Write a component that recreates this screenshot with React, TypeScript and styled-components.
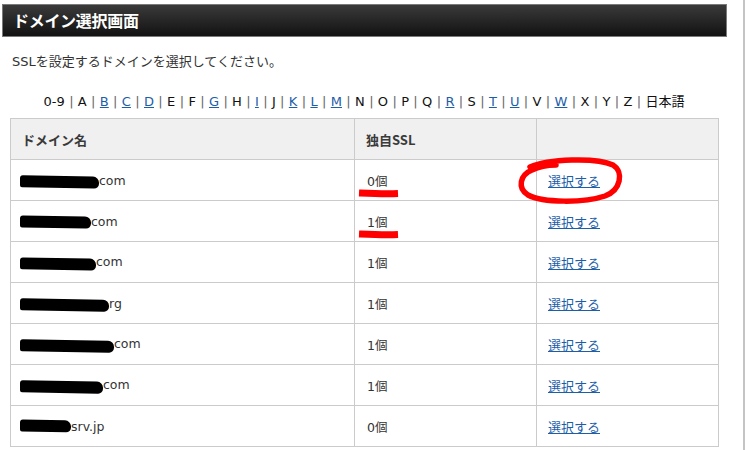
import styled, { createGlobalStyle } from "styled-components";

const GlobalStyle = createGlobalStyle`
    html, body {
        margin: 0;
        padding: 0;
        background: #fff;
    }
    body {
        font-family: "DejaVu Sans", "Noto Sans CJK JP", sans-serif;
        color: #333;
        font-size: 13px;
    }
`;

const Page = styled.div`
    width: 745px;
    min-height: 450px;
    border-right: 2px solid #c4c4c4;
    padding-top: 4px;
    box-sizing: border-box;
`;

const TitleBar = styled.h1`
    margin: 0 0 0 2px;
    width: 725px;
    height: 33px;
    box-sizing: border-box;
    border: 1px solid #7a7a7a;
    background: linear-gradient(#3a3a3a, #121212);
    color: #fff;
    font-family: "Noto Sans CJK JP", sans-serif;
    font-size: 16px;
    font-weight: 700;
    line-height: 31px;
    padding-left: 10px;
    letter-spacing: -0.3px;
`;

const Lead = styled.p`
    margin: 16px 0 0 12px;
    font-size: 13px;
    line-height: 18px;
    color: #333;
`;

const Content = styled.div`
    width: 708px;
    margin-left: 10px;
`;

const AlphaNav = styled.div`
    margin-top: 22px;
    text-align: center;
    font-size: 13px;
    line-height: 18px;
    color: #111;
`;

const Sep = styled.span`
    color: #666;
    margin: 0 4.35px;
`;

const NavLink = styled.a`
    color: #1d5ea8;
    text-decoration: underline;
`;

const Grid = styled.table`
    margin-top: 7px;
    width: 708px;
    border-collapse: collapse;
    table-layout: fixed;
`;

const Head = styled.th<{ $w: number }>`
    box-sizing: border-box;
    width: ${(p) => p.$w}px;
    height: 41px;
    background: #f0f0f0;
    border: 1px solid #cbcbcb;
    text-align: left;
    padding: 0 0 0 11px;
    font-family: "Noto Sans CJK JP", sans-serif;
    font-size: 13px;
    font-weight: 700;
    color: #3a3a3a;
`;

const Cell = styled.td<{ $pad?: number }>`
    position: relative;
    box-sizing: border-box;
    height: 41px;
    border: 1px solid #cbcbcb;
    padding: 0 0 0 ${(p) => p.$pad ?? 9}px;
    font-size: 12.5px;
    color: #333;
    white-space: nowrap;
`;

const Redact = styled.span<{ $w: number; $drop?: number }>`
    display: inline-block;
    width: ${(p) => p.$w}px;
    height: 12px;
    background: #000;
    border-radius: 3px 6px 5px 2px;
    vertical-align: ${(p) => -(p.$drop ?? 2)}px;
    transform: skewY(1deg);
`;

const SelectLink = styled.a`
    color: #1d5ea8;
    text-decoration: underline;
    font-family: "Noto Sans CJK JP", sans-serif;
    font-size: 13px;
`;

const Mark = styled.svg`
    position: absolute;
    pointer-events: none;
    overflow: visible;
`;

const letters: [string, boolean][] = [
    ["0-9", false], ["A", false], ["B", true], ["C", true], ["D", true],
    ["E", false], ["F", false], ["G", true], ["H", false], ["I", true],
    ["J", false], ["K", true], ["L", true], ["M", true], ["N", false],
    ["O", false], ["P", false], ["Q", false], ["R", true], ["S", false],
    ["T", true], ["U", true], ["V", false], ["W", true], ["X", false],
    ["Y", false], ["Z", false], ["日本語", false],
];

const rows = [
    { blot: 79, tail: "com", ssl: "0個", drop: 3 },
    { blot: 71, tail: "com", ssl: "1個", drop: 2 },
    { blot: 76, tail: "com", ssl: "1個", drop: 4 },
    { blot: 89, tail: "rg", ssl: "1個", drop: 3 },
    { blot: 94, tail: "com", ssl: "1個", drop: 4 },
    { blot: 83, tail: "com", ssl: "1個", drop: 4 },
    { blot: 51, tail: "srv.jp", ssl: "0個", drop: 1 },
];

function Underline() {
    return (
        <Mark width="42" height="9" style={{ left: 3, top: 29 }}>
            <path
                d="M1 4 C 14 4.6, 26 5.2, 40 4.6"
                stroke="#f00"
                strokeWidth="7"
                fill="none"
            />
        </Mark>
    );
}

function Circle() {
    return (
        <Mark width="104" height="46" style={{ left: -19, top: -2 }}>
            <path
                d="M12 9 C 30 1, 78 -1, 95 7 C 106 14, 103 32, 87 38 C 66 45, 25 45, 10 37 C -1 30, 2 17, 14 12 C 22 8, 32 7, 38 7"
                stroke="#f00"
                strokeWidth="5.5"
                strokeLinecap="round"
                fill="none"
            />
        </Mark>
    );
}

export default function App() {
    return (
        <>
            <GlobalStyle />
            <Page>
                <TitleBar>ドメイン選択画面</TitleBar>
                <Lead>SSLを設定するドメインを選択してください。</Lead>
                <Content>
                    <AlphaNav>
                        {letters.map(([l, link], i) => (
                            <span key={l}>
                                {link ? <NavLink href="#">{l}</NavLink> : l}
                                {i < letters.length - 1 && <Sep>|</Sep>}
                            </span>
                        ))}
                    </AlphaNav>
                    <Grid>
                        <thead>
                            <tr>
                                <Head $w={344}>ドメイン名</Head>
                                <Head $w={182}>独自SSL</Head>
                                <Head $w={182}></Head>
                            </tr>
                        </thead>
                        <tbody>
                            {rows.map((r, i) => (
                                <tr key={i}>
                                    <Cell>
                                        <Redact $w={r.blot} $drop={r.drop} />
                                        {r.tail}
                                    </Cell>
                                    <Cell $pad={12}>
                                        {r.ssl}
                                        {i < 2 && <Underline />}
                                    </Cell>
                                    <Cell $pad={11}>
                                        <SelectLink href="#">選択する</SelectLink>
                                        {i === 0 && <Circle />}
                                    </Cell>
                                </tr>
                            ))}
                        </tbody>
                    </Grid>
                </Content>
            </Page>
        </>
    );
}
